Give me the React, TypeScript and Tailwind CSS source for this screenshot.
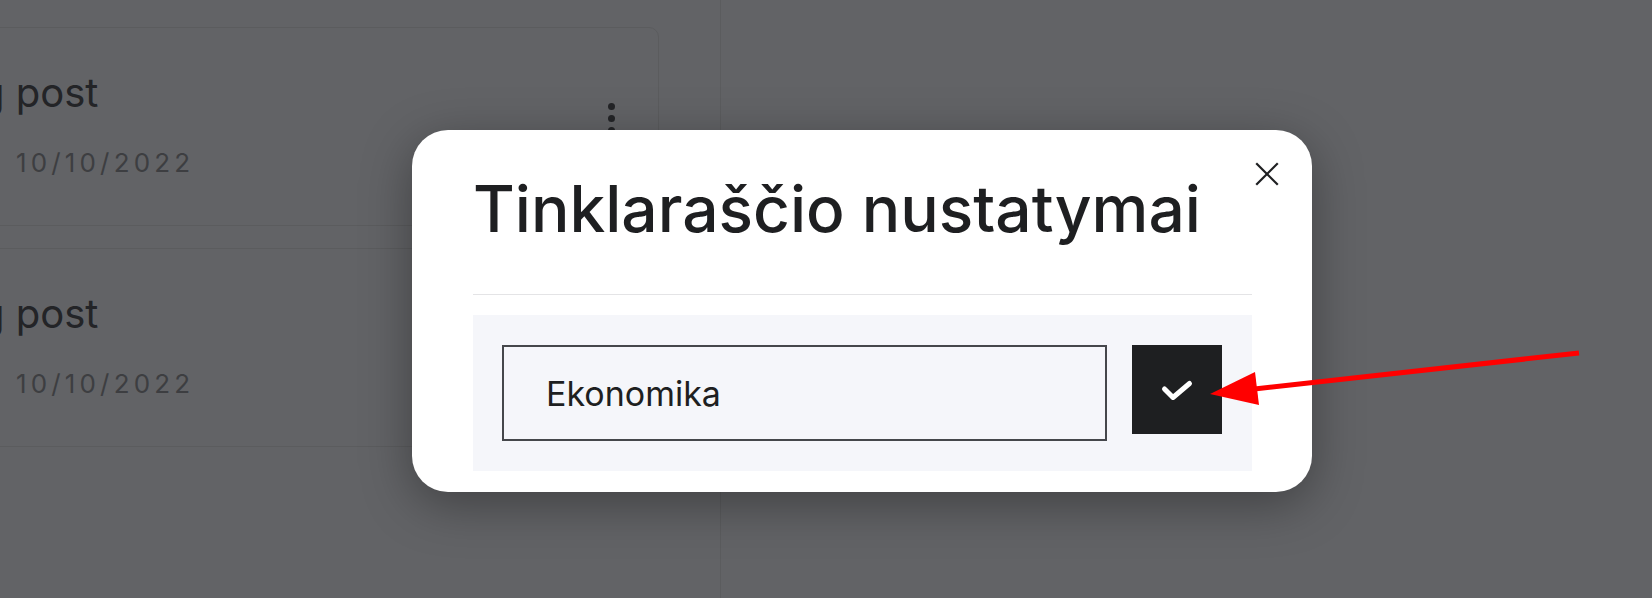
type Post = {
  title: string;
  date: string;
};

const posts: Post[] = [
  { title: "g post", date: "10/10/2022" },
  { title: "g post", date: "10/10/2022" },
];

function PostCard({ post }: { post: Post }) {
  return (
    <div className="flex h-[199px] w-[760px] -ml-[101px] justify-between rounded-[10px] border border-[#5b5c5e]">
      <div className="pl-[116px] pt-[45px]">
        <h3 className="-ml-[36px] h-[40px] text-[40px] leading-none text-[#232427] whitespace-nowrap">{post.title}</h3>
        <p className="mt-[37px] text-[26px] leading-none tracking-[0.16em] text-[#3d3e41]">{post.date}</p>
      </div>
      <div className="flex flex-col gap-[5px] pt-[75px] pr-[43px]">
        <span className="h-[7px] w-[7px] rounded-full bg-[#232427]" />
        <span className="h-[7px] w-[7px] rounded-full bg-[#232427]" />
        <span className="h-[7px] w-[7px] rounded-full bg-[#232427]" />
      </div>
    </div>
  );
}

export default function App() {
  return (
    <div className="relative h-[598px] w-[1652px] overflow-hidden bg-[#626366] font-['Inter','Liberation_Sans',sans-serif]">
      {/* page behind the dimmed overlay */}
      <div className="flex h-full">
        <div className="w-[721px] border-r border-[#5b5c5e] pt-[27px]">
          <div className="flex flex-col gap-[22px]">
            {posts.map((post, index) => (
              <PostCard key={index} post={post} />
            ))}
          </div>
        </div>
        <div className="flex-1" />
      </div>

      {/* settings dialog */}
      <div className="absolute left-[412px] top-[130px] w-[900px] rounded-[36px] bg-white pl-[61px] pr-[60px] pt-[47px] pb-[21px] shadow-[0_12px_50px_rgba(0,0,0,0.35)]">
        <button className="absolute right-[33px] top-[32px] text-[#1e1f21]">
          <svg width="24" height="24" viewBox="0 0 24 24" fill="none" stroke="currentColor" strokeWidth="2.2" strokeLinecap="square">
            <line x1="2" y1="2" x2="22" y2="22" />
            <line x1="22" y1="2" x2="2" y2="22" />
          </svg>
        </button>
        <h2 className="text-[64px] font-medium leading-none text-[#1e1f21] whitespace-nowrap">Tinklaraščio nustatymai</h2>
        <div className="mt-[53px] border-t border-[#e4e4e6]" />
        <div className="mt-[20px] flex items-start gap-[25px] bg-[#f5f6fa] py-[30px] pl-[29px] pr-[30px]">
          <div className="flex h-[96px] flex-1 items-center border-2 border-[#45474b] pl-[42px] text-[34px] text-[#1e1f21]">
            Ekonomika
          </div>
          <button className="h-[89px] w-[90px] bg-[#1e1f21]">
            <svg width="90" height="89" viewBox="0 0 90 89" fill="none" stroke="#ffffff" strokeWidth="5" strokeLinecap="round" strokeLinejoin="round">
              <polyline points="32.5,44 41,52.5 57.5,38.5" />
            </svg>
          </button>
        </div>
      </div>

      {/* annotation arrow */}
      <svg className="pointer-events-none absolute inset-0" width="1652" height="598" viewBox="0 0 1652 598">
        <line x1="1579" y1="353" x2="1250" y2="389.5" stroke="#ff0000" strokeWidth="5" />
        <polygon points="1210,394 1255,372 1259,405" fill="#ff0000" />
      </svg>
    </div>
  );
}
